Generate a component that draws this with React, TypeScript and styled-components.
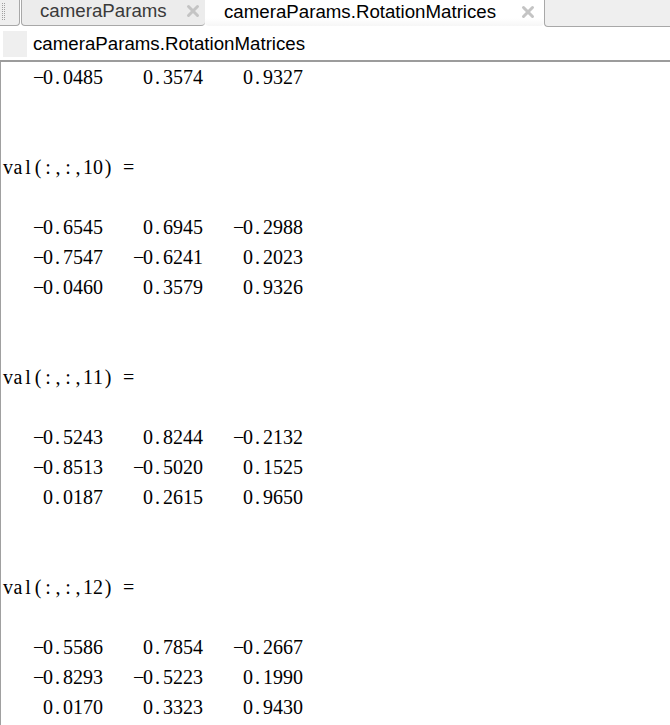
import React from 'react';
import styled, { createGlobalStyle } from 'styled-components';

const GlobalStyle = createGlobalStyle`
  html, body {
    margin: 0;
    padding: 0;
    background: #fff;
  }
`;

const Window = styled.div`
  width: 670px;
  height: 725px;
  overflow: hidden;
  display: flex;
  flex-direction: column;
  background: #fff;
  font-family: "Liberation Sans", Arial, sans-serif;
`;

const TabBar = styled.div`
  height: 28px;
  display: flex;
  align-items: flex-start;
  flex-shrink: 0;
  background: #fff;
`;

const Grip = styled.div`
  width: 20px;
  height: 26px;
  box-sizing: border-box;
  background: #efefef;
  border-right: 1px solid #a8a8a8;
  border-bottom: 1px solid #a8a8a8;
  border-bottom-right-radius: 4px;
  display: flex;
  gap: 1px;
  padding: 3px 0 0 2px;
`;

const GripDots = styled.div`
  width: 1px;
  height: 18px;
  background-image: linear-gradient(#a0a0a0 50%, transparent 50%);
  background-size: 1px 2px;
`;

const Tab = styled.div<{ $active?: boolean }>`
  height: 26px;
  box-sizing: border-box;
  display: flex;
  align-items: center;
  justify-content: space-between;
  font-size: 18.7px;
  color: ${(p) => (p.$active ? '#000' : '#3a3a3a')};
  background: ${(p) => (p.$active ? 'linear-gradient(#fff, #fff 70%, #f6f6f6)' : '#ececec')};
  border-bottom: ${(p) => (p.$active ? 'none' : '1px solid #a8a8a8')};
  border-left: ${(p) => (p.$active ? 'none' : '1px solid #a8a8a8')};
  border-bottom-left-radius: 4px;
  border-bottom-right-radius: 4px;
  width: ${(p) => (p.$active ? '339px' : '184px')};
  margin-left: ${(p) => (p.$active ? '0' : '1px')};
  padding: ${(p) => (p.$active ? '0 8px 3px 19px' : '0 4px 3px 18px')};
`;

const Filler = styled.div`
  flex: 1;
  height: 27px;
  box-sizing: border-box;
  background: #efefef;
  border-left: 1px solid #a8a8a8;
  border-bottom: 1px solid #a8a8a8;
  border-bottom-left-radius: 4px;
`;

const CloseIcon = () => (
  <svg width="16" height="16" viewBox="0 0 16 16">
    <g stroke="#c4c4c4" strokeWidth="3" strokeLinecap="round">
      <line x1="3.5" y1="3.5" x2="12.5" y2="12.5" />
      <line x1="12.5" y1="3.5" x2="3.5" y2="12.5" />
    </g>
  </svg>
);

const TitleRow = styled.div`
  height: 32px;
  flex-shrink: 0;
  display: flex;
  align-items: center;
  gap: 6px;
  padding-left: 3px;
  font-size: 18.7px;
  color: #000;
  border-bottom: 2px solid #9c9c9c;
`;

const TitleIcon = styled.div`
  width: 24px;
  height: 26px;
  background: #efefef;
`;

const Output = styled.div`
  flex: 1;
  border-left: 1px solid #a0a0a0;
  padding-left: 2px;
  font-family: "Liberation Serif", "Times New Roman", serif;
  font-size: 20px;
  color: #000;
`;

const Line = styled.div`
  height: 30px;
  display: flex;
  align-items: center;
`;

const Char = styled.span<{ $dot?: boolean }>`
  width: 10px;
  display: inline-block;
  text-align: ${(p) => (p.$dot ? 'left' : 'center')};
  padding-left: ${(p) => (p.$dot ? '2px' : '0')};
  box-sizing: border-box;
  white-space: pre;
`;

const fmt = (n: string) => n.padStart(10, ' ');

const row = (a: string, b: string, c: string) => fmt(a) + fmt(b) + fmt(c);

const lines: string[] = [
  row('-0.0485', '0.3574', '0.9327'),
  '',
  '',
  'val(:,:,10) =',
  '',
  row('-0.6545', '0.6945', '-0.2988'),
  row('-0.7547', '-0.6241', '0.2023'),
  row('-0.0460', '0.3579', '0.9326'),
  '',
  '',
  'val(:,:,11) =',
  '',
  row('-0.5243', '0.8244', '-0.2132'),
  row('-0.8513', '-0.5020', '0.1525'),
  row('0.0187', '0.2615', '0.9650'),
  '',
  '',
  'val(:,:,12) =',
  '',
  row('-0.5586', '0.7854', '-0.2667'),
  row('-0.8293', '-0.5223', '0.1990'),
  row('0.0170', '0.3323', '0.9430'),
];

const TextLine: React.FC<{ text: string }> = ({ text }) => (
  <Line>
    {text.split('').map((ch, i) => (
      <Char key={i} $dot={ch === '.'}>
        {ch === '-' ? '\u2212' : ch}
      </Char>
    ))}
  </Line>
);

const App: React.FC = () => {
  return (
    <>
      <GlobalStyle />
      <Window>
        <TabBar>
          <Grip>
            <GripDots />
            <GripDots />
          </Grip>
          <Tab>
            <span>cameraParams</span>
            <CloseIcon />
          </Tab>
          <Tab $active>
            <span>cameraParams.RotationMatrices</span>
            <CloseIcon />
          </Tab>
          <Filler />
        </TabBar>
        <TitleRow>
          <TitleIcon />
          <span>cameraParams.RotationMatrices</span>
        </TitleRow>
        <Output>
          {lines.map((l, i) => (
            <TextLine key={i} text={l} />
          ))}
        </Output>
      </Window>
    </>
  );
};

export default App;
